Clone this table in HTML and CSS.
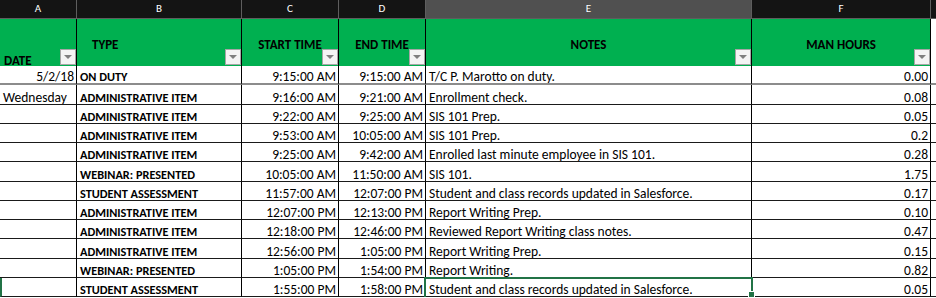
FILE: index.html
```html
<!DOCTYPE html>
<html>
<head>
<meta charset="utf-8">
<link rel="stylesheet" href="styles.css">
</head>
<body>
<div class="sheet">
  <div class="col-head">A</div>
  <div class="col-head">B</div>
  <div class="col-head">C</div>
  <div class="col-head">D</div>
  <div class="col-head sel">E</div>
  <div class="col-head">F</div>
  <div class="col-head last"></div>

  <div class="hcell h-date"><span>DATE</span><i class="filter"></i></div>
  <div class="hcell h-type"><span>TYPE</span><i class="filter"></i></div>
  <div class="hcell"><span>START TIME</span><i class="filter"></i></div>
  <div class="hcell"><span>END TIME</span><i class="filter"></i></div>
  <div class="hcell"><span>NOTES</span><i class="filter"></i></div>
  <div class="hcell"><span>MAN HOURS</span><i class="filter"></i></div>
  <div class="hcell blank"></div>

  <div class="c r first">5/2/18</div><div class="c b first">ON DUTY</div><div class="c r first">9:15:00 AM</div><div class="c r first">9:15:00 AM</div><div class="c first">T/C P. Marotto on duty.</div><div class="c r first">0.00</div><div class="c e first"></div>
  <div class="c">Wednesday</div><div class="c b">ADMINISTRATIVE ITEM</div><div class="c r">9:16:00 AM</div><div class="c r">9:21:00 AM</div><div class="c">Enrollment check.</div><div class="c r">0.08</div><div class="c e"></div>
  <div class="c"></div><div class="c b">ADMINISTRATIVE ITEM</div><div class="c r">9:22:00 AM</div><div class="c r">9:25:00 AM</div><div class="c">SIS 101 Prep.</div><div class="c r">0.05</div><div class="c e"></div>
  <div class="c"></div><div class="c b">ADMINISTRATIVE ITEM</div><div class="c r">9:53:00 AM</div><div class="c r">10:05:00 AM</div><div class="c">SIS 101 Prep.</div><div class="c r">0.2</div><div class="c e"></div>
  <div class="c"></div><div class="c b">ADMINISTRATIVE ITEM</div><div class="c r">9:25:00 AM</div><div class="c r">9:42:00 AM</div><div class="c">Enrolled last minute employee in SIS 101.</div><div class="c r">0.28</div><div class="c e"></div>
  <div class="c"></div><div class="c b">WEBINAR: PRESENTED</div><div class="c r">10:05:00 AM</div><div class="c r">11:50:00 AM</div><div class="c">SIS 101.</div><div class="c r">1.75</div><div class="c e"></div>
  <div class="c"></div><div class="c b">STUDENT ASSESSMENT</div><div class="c r">11:57:00 AM</div><div class="c r">12:07:00 PM</div><div class="c">Student and class records updated in Salesforce.</div><div class="c r">0.17</div><div class="c e"></div>
  <div class="c"></div><div class="c b">ADMINISTRATIVE ITEM</div><div class="c r">12:07:00 PM</div><div class="c r">12:13:00 PM</div><div class="c">Report Writing Prep.</div><div class="c r">0.10</div><div class="c e"></div>
  <div class="c"></div><div class="c b">ADMINISTRATIVE ITEM</div><div class="c r">12:18:00 PM</div><div class="c r">12:46:00 PM</div><div class="c">Reviewed Report Writing class notes.</div><div class="c r">0.47</div><div class="c e"></div>
  <div class="c"></div><div class="c b">ADMINISTRATIVE ITEM</div><div class="c r">12:56:00 PM</div><div class="c r">1:05:00 PM</div><div class="c">Report Writing Prep.</div><div class="c r">0.15</div><div class="c e"></div>
  <div class="c"></div><div class="c b">WEBINAR: PRESENTED</div><div class="c r">1:05:00 PM</div><div class="c r">1:54:00 PM</div><div class="c">Report Writing.</div><div class="c r">0.82</div><div class="c e"></div>
  <div class="c rowsel"></div><div class="c b">STUDENT ASSESSMENT</div><div class="c r">1:55:00 PM</div><div class="c r">1:58:00 PM</div><div class="c active">Student and class records updated in Salesforce.<i class="handle"></i></div><div class="c r">0.05</div><div class="c e"></div>
</div>
</body>
</html>
```
FILE: styles.css
```css
html, body {
  margin: 0;
  padding: 0;
  background: #fff;
  overflow: hidden;
}
.sheet {
  display: grid;
  grid-template-columns: 77px 165px 97px 87px 326px 179px 5px;
  grid-template-rows: 19px 47px repeat(12, 19.27px);
  font-family: Carlito, Lato, "Liberation Sans", sans-serif;
  font-size: 13.5px;
  color: #000;
}
.col-head {
  box-sizing: border-box;
  background: #141414;
  color: #fff;
  font-size: 11px;
  display: flex;
  align-items: center;
  justify-content: center;
  border-right: 1px solid #5e5e5e;
  border-bottom: 1px solid #5e5e5e;
  padding-bottom: 1px;
}
.col-head.sel {
  background: #505050;
}
.col-head.last {
  border-right: none;
}
.hcell {
  position: relative;
  box-sizing: border-box;
  background: #00b050;
  border-right: 1px solid #000;
  display: flex;
  align-items: center;
  justify-content: center;
  font-weight: bold;
  font-size: 13px;
  padding-top: 3px;
}
.hcell.h-date {
  align-items: flex-end;
  justify-content: flex-start;
  padding: 0 0 0 4px;
  line-height: 11px;
}
.hcell.h-type {
  justify-content: flex-start;
  padding-left: 15px;
}
.hcell.blank {
  background: #fff;
  border-right: none;
}
.filter {
  position: absolute;
  right: 0;
  bottom: 1px;
  width: 16px;
  height: 16px;
  box-sizing: border-box;
  background: #f4f4f4;
  border: 1px solid #a6a6a6;
}
.filter::after {
  content: "";
  position: absolute;
  left: 3px;
  top: 5px;
  border-left: 4px solid transparent;
  border-right: 4px solid transparent;
  border-top: 4px solid #7f7f7f;
}
.c {
  position: relative;
  box-sizing: border-box;
  border-right: 1px solid #000;
  border-bottom: 1px solid #1a1a1a;
  display: flex;
  align-items: flex-end;
  padding: 0 2px 0 3px;
  line-height: 13px;
  white-space: nowrap;
  overflow: visible;
}
.c.first {
  border-bottom: 2px solid #8c8c8c;
}
.c.r {
  justify-content: flex-end;
}
.c.b {
  font-weight: bold;
  font-size: 12.3px;
}
.c.e {
  border-right: none;
}
.c.rowsel {
  border-left: 2px solid #217346;
}
.c.active {
  z-index: 2;
}
.c.active::after {
  content: "";
  position: absolute;
  left: -2px;
  top: -1px;
  right: -2px;
  bottom: -3px;
  border: 2px solid #217346;
  pointer-events: none;
}
.handle {
  position: absolute;
  right: -4px;
  bottom: -2px;
  width: 5px;
  height: 5px;
  background: #217346;
  border: 1px solid #fff;
  z-index: 3;
}
```
